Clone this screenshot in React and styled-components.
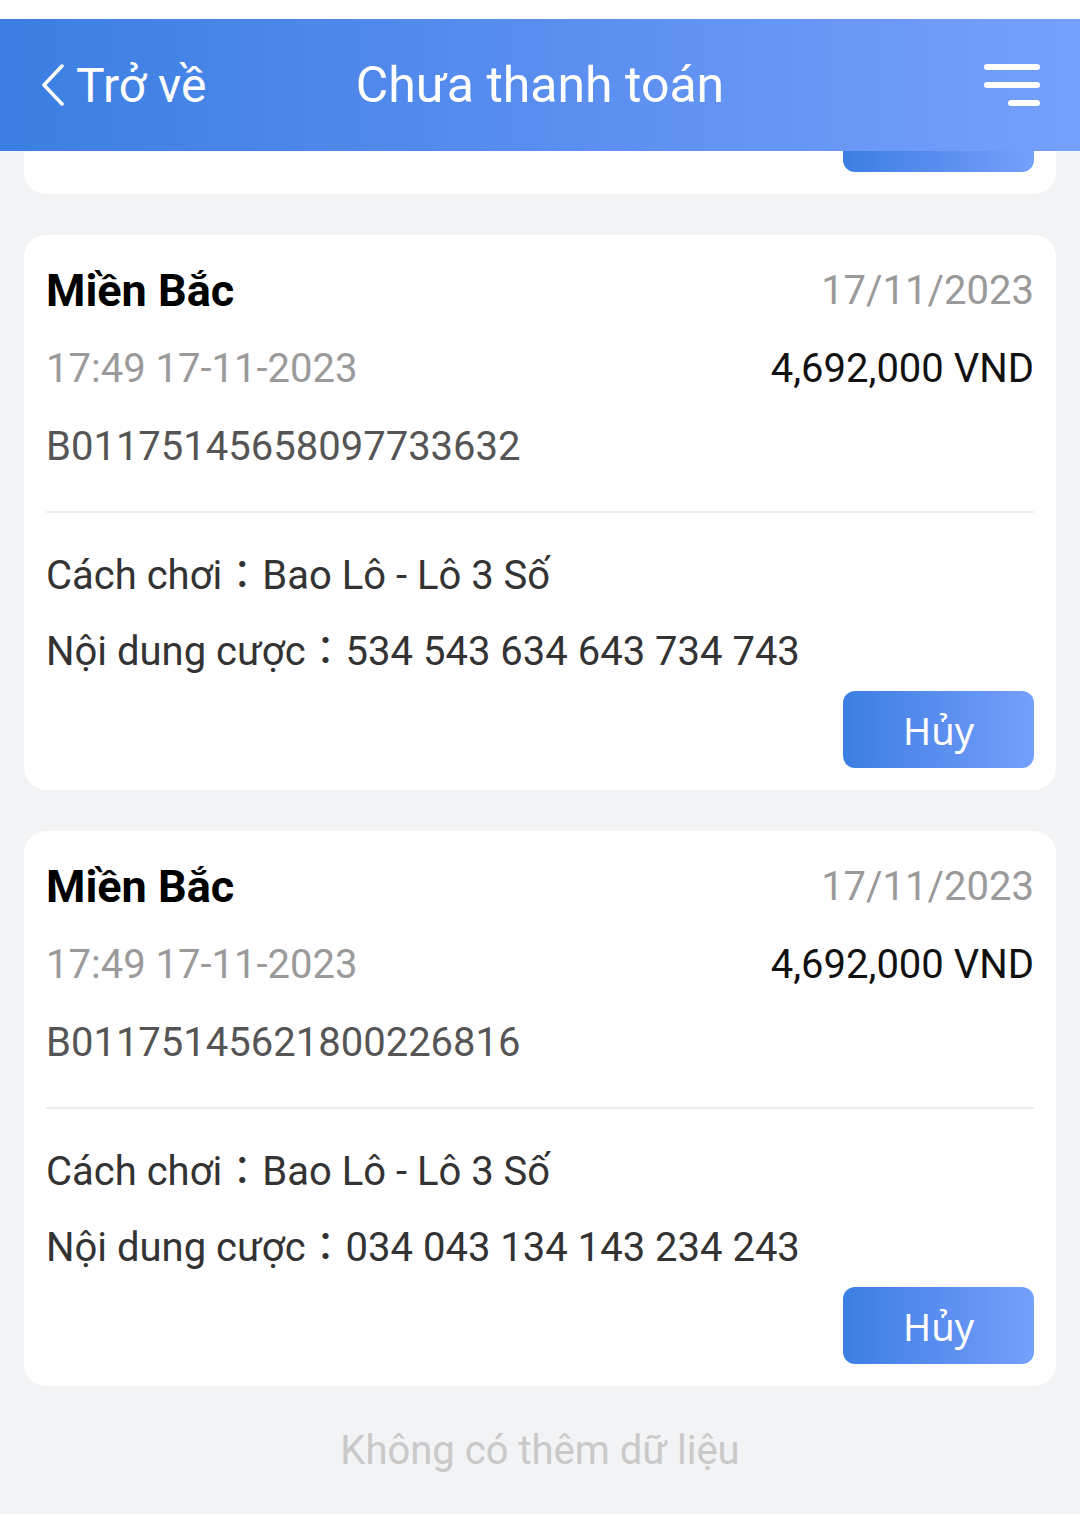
import React from "react";
import styled, { createGlobalStyle } from "styled-components";

const GlobalStyle = createGlobalStyle`
  body {
    margin: 0;
    background: #f2f3f5;
    font-family: Roboto, "Noto Sans", "Noto Sans CJK TC", sans-serif;
  }
`;

const blueGradient = "linear-gradient(90deg, #3b7fe2 0%, #5c8ff0 55%, #75a0fd 100%)";

const Page = styled.div`
  min-height: 1514px;
  background: #f2f3f5;
`;

const StatusBar = styled.div`
  height: 19px;
  background: #fff;
`;

const Header = styled.header`
  height: 132px;
  display: grid;
  grid-template-columns: 1fr auto 1fr;
  align-items: center;
  padding: 0 40px;
  background: ${blueGradient};
  color: #fff;
`;

const BackLink = styled.a`
  display: flex;
  align-items: center;
  gap: 10px;
  font-size: 48px;
  color: #fff;
  text-decoration: none;
  justify-self: start;
`;

const Title = styled.h1`
  margin: 0;
  font-size: 50px;
  font-weight: 400;
`;

const MenuButton = styled.button`
  justify-self: end;
  display: flex;
  flex-direction: column;
  align-items: flex-end;
  gap: 12px;
  width: 56px;
  padding: 0;
  border: 0;
  background: none;
`;

const MenuLine = styled.span`
  display: block;
  height: 6px;
  width: ${(p) => (p.$short ? "32px" : "56px")};
  border-radius: 3px;
  background: #fff;
`;

const List = styled.main`
  display: flex;
  flex-direction: column;
  gap: 41px;
  padding: 0 24px;
`;

const CardTail = styled.div`
  height: 43px;
  display: flex;
  justify-content: flex-end;
  align-items: flex-start;
  padding-right: 22px;
  background: #fff;
  border-radius: 0 0 22px 22px;
`;

const ButtonTail = styled.div`
  width: 191px;
  height: 21px;
  border-radius: 0 0 12px 12px;
  background: ${blueGradient};
`;

const Card = styled.section`
  background: #fff;
  border-radius: 22px;
  padding: 16px 22px 22px;
`;

const Row = styled.div`
  display: flex;
  justify-content: space-between;
  align-items: center;
  height: 78px;
`;

const Region = styled.span`
  font-size: 45px;
  font-weight: 700;
  color: #000;
`;

const Text = styled.span`
  font-size: 40px;
  color: ${(p) => p.$color || "#333"};
`;

const Divider = styled.hr`
  margin: 26px 0 21px;
  border: 0;
  height: 2px;
  background: #ededed;
`;

const InfoLine = styled.div`
  height: 76px;
  display: flex;
  align-items: center;
  font-family: Roboto, "Noto Sans CJK TC", sans-serif;
  font-size: 40px;
  color: #333;
  white-space: pre;
`;

const Actions = styled.div`
  display: flex;
  justify-content: flex-end;
  margin-top: 5px;
`;

const CancelButton = styled.button`
  width: 191px;
  height: 77px;
  border: 0;
  border-radius: 12px;
  background: ${blueGradient};
  color: #fff;
  font-family: "Noto Sans", "Open Sans", sans-serif;
  font-size: 38px;
`;

const Footer = styled.div`
  height: 128px;
  display: flex;
  align-items: center;
  justify-content: center;
  font-size: 40px;
  color: #c9c9c9;
`;

const bets = [
  { id: "B01175145658097733632", numbers: "534 543 634 643 734 743" },
  { id: "B01175145621800226816", numbers: "034 043 134 143 234 243" },
];

const Chevron = () => (
  <svg width="26" height="42" viewBox="0 0 26 42" fill="none">
    <path d="M22 2 L4 21 L22 40" stroke="#fff" strokeWidth="3.5" strokeLinecap="round" strokeLinejoin="round" />
  </svg>
);

const BetCard = ({ bet }) => (
  <Card>
    <Row>
      <Region>Miền Bắc</Region>
      <Text $color="#9a9a9a">17/11/2023</Text>
    </Row>
    <Row>
      <Text $color="#9a9a9a">17:49 17-11-2023</Text>
      <Text $color="#111">4,692,000 VND</Text>
    </Row>
    <Row>
      <Text $color="#555">{bet.id}</Text>
    </Row>
    <Divider />
    <InfoLine>Cách chơi：Bao Lô - Lô 3 Số</InfoLine>
    <InfoLine>Nội dung cược：{bet.numbers}</InfoLine>
    <Actions>
      <CancelButton>Hủy</CancelButton>
    </Actions>
  </Card>
);

export default function App() {
  return (
    <Page>
      <GlobalStyle />
      <StatusBar />
      <Header>
        <BackLink href="#">
          <Chevron />
          Trở về
        </BackLink>
        <Title>Chưa thanh toán</Title>
        <MenuButton aria-label="menu">
          <MenuLine />
          <MenuLine />
          <MenuLine $short />
        </MenuButton>
      </Header>
      <List>
        <CardTail>
          <ButtonTail />
        </CardTail>
        {bets.map((bet) => (
          <BetCard key={bet.id} bet={bet} />
        ))}
      </List>
      <Footer>Không có thêm dữ liệu</Footer>
    </Page>
  );
}
